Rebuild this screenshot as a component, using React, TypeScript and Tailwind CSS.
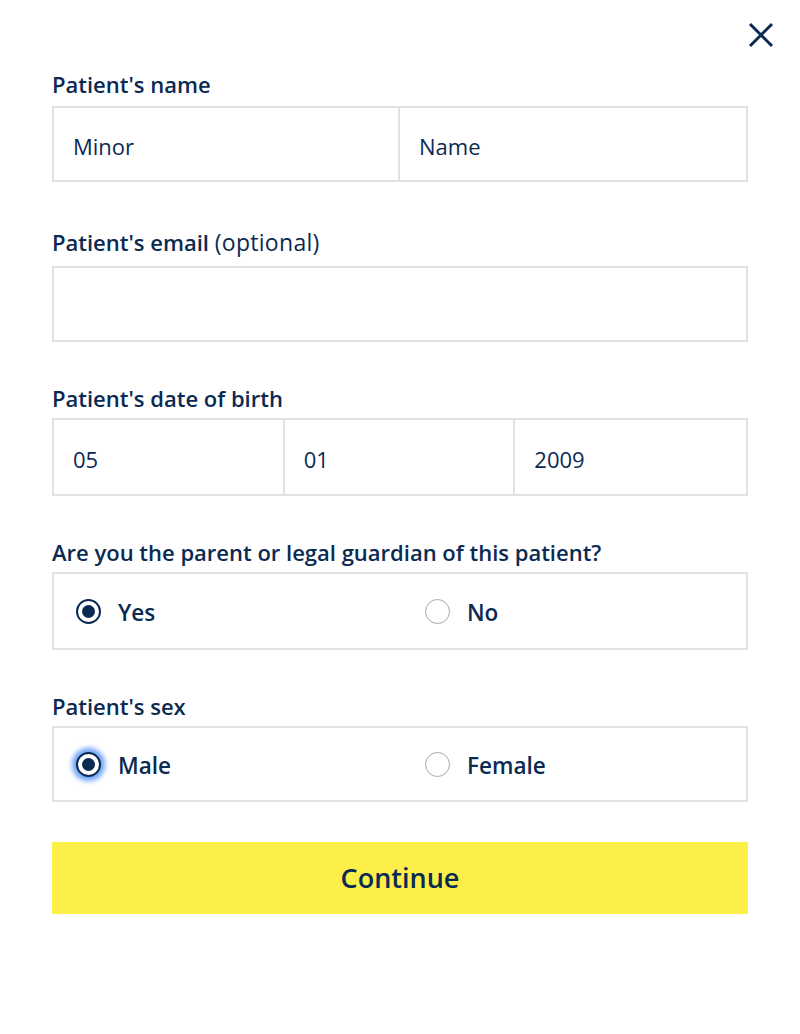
import React, { useState } from 'react';

const font = { fontFamily: '"Open Sans", "Noto Sans", sans-serif' };

const Label: React.FC<{ children: React.ReactNode; mb: string }> = ({ children, mb }) => (
  <div className={'text-[22px] leading-[28px] font-semibold text-[#0b2a52] ' + mb}>{children}</div>
);

const Radio: React.FC<{ checked: boolean; focus?: boolean; label: string; onClick: () => void }> = ({
  checked,
  focus,
  label,
  onClick,
}) => (
  <button onClick={onClick} className="flex items-center gap-[17px] text-left">
    <span
      className={
        'flex items-center justify-center w-[25px] h-[25px] rounded-full bg-white ' +
        (checked ? 'border-2 border-[#0b2a52] ' : 'border-[1.5px] border-[#a9a9a9] ') +
        (focus ? 'shadow-[0_0_5px_4px_rgba(59,130,246,0.75)]' : '')
      }
    >
      {checked && <span className="w-[13px] h-[13px] rounded-full bg-[#0b2a52]" />}
    </span>
    <span className="mt-[3px] text-[22.5px] font-semibold text-[#0b2a52]">{label}</span>
  </button>
);

export default function App() {
  const [guardian, setGuardian] = useState('yes');
  const [sex, setSex] = useState('male');

  return (
    <div className="w-[800px] h-[1034px] bg-white relative px-[52px] pt-[70px]" style={font}>
      {/* close */}
      <button className="absolute right-[26px] top-[22px] text-[#0b2a52]">
        <svg width="26" height="26" viewBox="0 0 26 26" fill="none" stroke="currentColor" strokeWidth="3">
          <path d="M2 2 L24 24 M24 2 L2 24" />
        </svg>
      </button>

      <Label mb="mb-[8px]">Patient's name</Label>
      <div className="grid grid-cols-2 h-[76px] border-2 border-[#e2e2e2]">
        <div className="flex items-center px-[19px] pt-[5px] text-[22px] text-[#0b2a52] border-r-2 border-[#e2e2e2]">Minor</div>
        <div className="flex items-center px-[19px] pt-[5px] text-[22px] text-[#0b2a52]">Name</div>
      </div>

      <div className="mt-[46px]">
        <Label mb="mb-[10px]">
          Patient's email <span className="font-normal text-[23px] tracking-[0.3px]">(optional)</span>
        </Label>
        <div className="h-[76px] border-2 border-[#e2e2e2]" />
      </div>

      <div className="mt-[42px]">
        <Label mb="mb-[6px]">Patient's date of birth</Label>
        <div className="grid grid-cols-3 h-[78px] border-2 border-[#e2e2e2]">
          <div className="flex items-center px-[19px] pt-[5px] text-[22px] text-[#0b2a52] border-r-2 border-[#e2e2e2]">05</div>
          <div className="flex items-center px-[19px] pt-[5px] text-[22px] text-[#0b2a52] border-r-2 border-[#e2e2e2]">01</div>
          <div className="flex items-center px-[19px] pt-[5px] text-[22px] text-[#0b2a52]">2009</div>
        </div>
      </div>

      <div className="mt-[42px]">
        <Label mb="mb-[6px]">Are you the parent or legal guardian of this patient?</Label>
        <div className="grid grid-cols-2 h-[78px] border-2 border-[#e2e2e2]">
          <div className="flex items-center pl-[22px]">
            <Radio checked={guardian === 'yes'} label="Yes" onClick={() => setGuardian('yes')} />
          </div>
          <div className="flex items-center pl-[25px]">
            <Radio checked={guardian === 'no'} label="No" onClick={() => setGuardian('no')} />
          </div>
        </div>
      </div>

      <div className="mt-[42px]">
        <Label mb="mb-[6px]">Patient's sex</Label>
        <div className="grid grid-cols-2 h-[76px] border-2 border-[#e2e2e2]">
          <div className="flex items-center pl-[22px]">
            <Radio checked={sex === 'male'} focus label="Male" onClick={() => setSex('male')} />
          </div>
          <div className="flex items-center pl-[25px]">
            <Radio checked={sex === 'female'} label="Female" onClick={() => setSex('female')} />
          </div>
        </div>
      </div>

      <button className="mt-[40px] w-full h-[72px] bg-[#fdef4a] text-[#0b2a52] text-[27px] font-semibold">
        Continue
      </button>
    </div>
  );
}
